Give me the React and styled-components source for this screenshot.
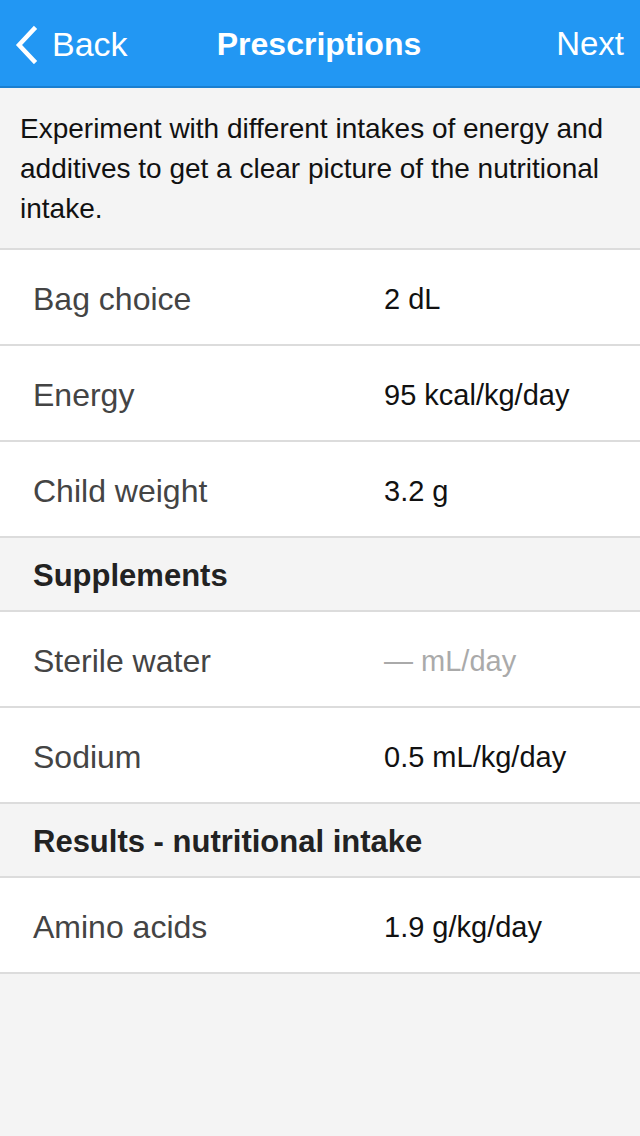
import React from "react";
import styled, { createGlobalStyle } from "styled-components";

const GlobalStyle = createGlobalStyle`
  html, body {
    margin: 0;
    padding: 0;
    background: #f4f4f4;
    font-family: "Liberation Sans", Arial, sans-serif;
  }
  * {
    box-sizing: border-box;
  }
`;

const rows = [
  { type: "row", label: "Bag choice", value: "2 dL" },
  { type: "row", label: "Energy", value: "95 kcal/kg/day" },
  { type: "row", label: "Child weight", value: "3.2 g" },
  { type: "section", label: "Supplements" },
  { type: "row", label: "Sterile water", value: "— mL/day", empty: true },
  { type: "row", label: "Sodium", value: "0.5 mL/kg/day" },
  { type: "section", label: "Results - nutritional intake" },
  { type: "row", label: "Amino acids", value: "1.9 g/kg/day" },
];

const App = () => {
  return (
    <Page>
      <GlobalStyle />
      <NavBar>
        <NavButton>
          <svg width="28" height="40" viewBox="0 0 28 40">
            <path d="M22 5 L7 21 L22 37" fill="none" stroke="#fff" strokeWidth="4.5" strokeLinecap="square" />
          </svg>
          <span>Back</span>
        </NavButton>
        <Title>Prescriptions</Title>
        <NextButton>Next</NextButton>
      </NavBar>
      <Intro>
        Experiment with different intakes of energy and additives to get a clear picture of the nutritional intake.
      </Intro>
      <List>
        {rows.map((r, i) =>
          r.type === "section" ? (
            <SectionHeader key={i}>{r.label}</SectionHeader>
          ) : (
            <Row key={i}>
              <Label>{r.label}</Label>
              <Value $empty={r.empty}>{r.value}</Value>
            </Row>
          )
        )}
      </List>
    </Page>
  );
};

export default App;

const Page = styled.div`
  width: 640px;
  min-height: 1136px;
  background: #f4f4f4;
`;

const NavBar = styled.header`
  height: 88px;
  background: #2297f3;
  border-bottom: 2px solid #1a7fd0;
  display: grid;
  grid-template-columns: 1fr auto 1fr;
  align-items: center;
  color: #fff;
  padding: 2px 16px 0 12px;
`;

const NavButton = styled.div`
  display: flex;
  align-items: center;
  gap: 12px;
  font-size: 34px;
  justify-self: start;

  svg {
    display: block;
  }
`;

const Title = styled.h1`
  margin: 0;
  font-size: 32px;
  font-weight: bold;
  padding-left: 2px;
`;

const NextButton = styled.div`
  justify-self: end;
  font-size: 33px;
`;

const Intro = styled.p`
  margin: 0;
  padding: 21px 20px 19px;
  font-size: 28px;
  line-height: 40px;
  color: #111;
  border-bottom: 2px solid #dcdcdc;
`;

const List = styled.div`
  display: flex;
  flex-direction: column;
`;

const Row = styled.div`
  height: 96px;
  background: #fff;
  border-bottom: 2px solid #dcdcdc;
  display: grid;
  grid-template-columns: 351px 1fr;
  align-items: center;
  padding: 5px 0 0 33px;
`;

const Label = styled.div`
  font-size: 32px;
  color: #444;
`;

const Value = styled.div`
  font-size: 29px;
  color: ${(p) => (p.$empty ? "#aaa" : "#111")};
`;

const SectionHeader = styled.div`
  height: 74px;
  display: flex;
  align-items: center;
  padding: 4px 0 0 33px;
  font-size: 31px;
  font-weight: bold;
  color: #222;
  border-bottom: 2px solid #dcdcdc;
`;
